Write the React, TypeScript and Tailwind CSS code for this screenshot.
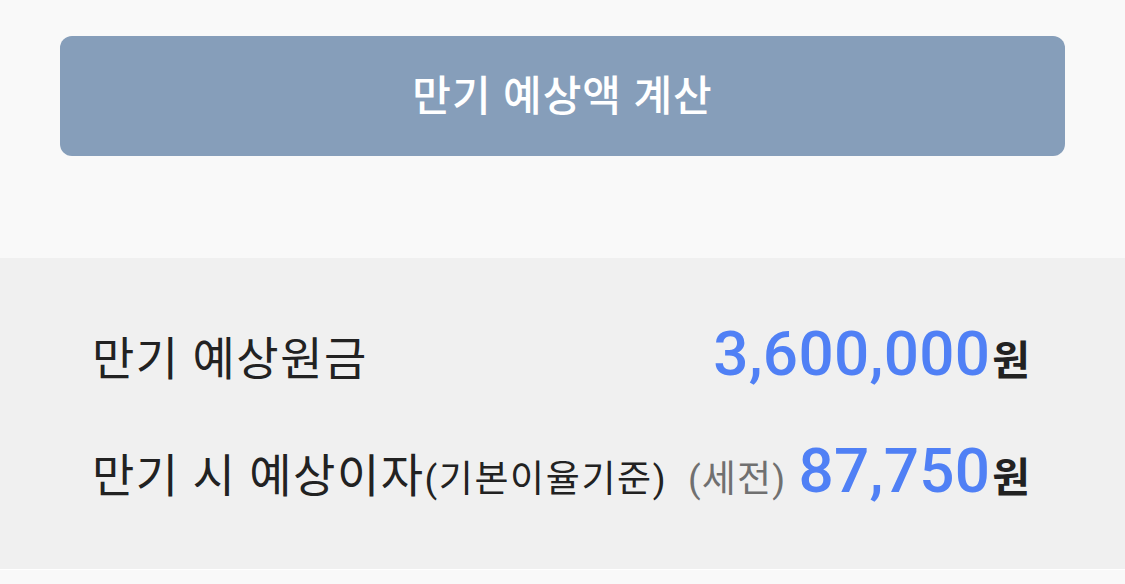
import React from "react";

const font = { fontFamily: "Roboto, 'Noto Sans CJK KR', sans-serif" };

function ResultRow({
  label,
  note,
  tax,
  amount,
}: {
  label: string;
  note?: string;
  tax?: string;
  amount: string;
}) {
  return (
    <div className="flex items-baseline justify-between h-[62px] leading-none">
      <div className="flex items-baseline text-[46px] tracking-[1.5px] text-[#222]">
        <span>{label}</span>
        {note && <span className="text-[37px] tracking-[1.6px] text-[#222]">{note}</span>}
      </div>
      <div className="flex items-baseline">
        {tax && (
          <span className="text-[37px] tracking-[1.2px] text-[#707070] mr-[12px]">{tax}</span>
        )}
        <span className="text-[62px] font-medium text-[#5080f5] tracking-[0.3px]">
          {amount}
        </span>
        <span className="text-[41px] font-bold text-[#222] ml-[2px]">원</span>
      </div>
    </div>
  );
}

export default function App() {
  return (
    <div className="w-[1125px] h-[584px] bg-[#f9f9f9] flex flex-col" style={font}>
      <div className="h-[258px] px-[60px] pt-[36px]">
        <button
          type="button"
          className="w-full h-[120px] rounded-[12px] bg-[#869eba] text-white text-[42px] tracking-[1px] font-medium flex items-center justify-center"
        >
          만기 예상액 계산
        </button>
      </div>
      <div className="h-[311px] bg-[#f0f0f0] pl-[92px] pr-[95px] pt-[65px] flex flex-col gap-[55px]">
        <ResultRow label="만기 예상원금" amount="3,600,000" />
        <ResultRow
          label="만기 시 예상이자"
          note="(기본이율기준)"
          tax="(세전)"
          amount="87,750"
        />
      </div>
      <div className="flex-1 border-t border-white bg-[#f9f9f9]" />
    </div>
  );
}
